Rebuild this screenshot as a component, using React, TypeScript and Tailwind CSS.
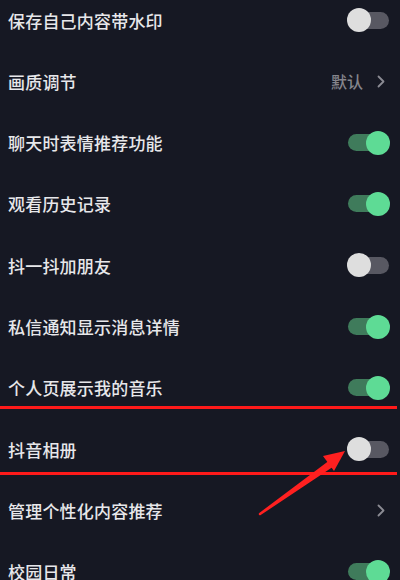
import React from 'react';

type Row = { label: string; kind: 'on' | 'off' | 'link'; value?: string };

const rows: Row[] = [
  { label: '保存自己内容带水印', kind: 'off' },
  { label: '画质调节', kind: 'link', value: '默认' },
  { label: '聊天时表情推荐功能', kind: 'on' },
  { label: '观看历史记录', kind: 'on' },
  { label: '抖一抖加朋友', kind: 'off' },
  { label: '私信通知显示消息详情', kind: 'on' },
  { label: '个人页展示我的音乐', kind: 'on' },
  { label: '抖音相册', kind: 'off' },
  { label: '管理个性化内容推荐', kind: 'link' },
  { label: '校园日常', kind: 'on' },
];

const Toggle = ({ on }: { on: boolean }) => (
  <div className="relative w-[43px] h-[24px] flex items-center">
    <div className={`mx-[1px] w-[41px] h-[17px] rounded-full ${on ? 'bg-[#3f7b5b]' : 'bg-[#585862]'}`} />
    <div
      className={`absolute top-0 w-[24px] h-[24px] rounded-full ${
        on ? 'right-0 bg-[#5edb95]' : 'left-0 bg-[#dedede]'
      }`}
    />
  </div>
);

const Chevron = () => (
  <svg width="8" height="13" viewBox="0 0 8 13" fill="none">
    <path d="M1.5 1.5 L6.5 6.5 L1.5 11.5" stroke="#8b8b93" strokeWidth="1.8" strokeLinecap="round" strokeLinejoin="round" />
  </svg>
);

const App = () => {
  return (
    <div
      className="relative w-[400px] h-[580px] overflow-hidden bg-[#161823]"
      style={{ fontFamily: '"Noto Sans CJK SC", "Noto Sans", sans-serif' }}
    >
      <div className="-mt-[10.67px] flex flex-col">
        {rows.map((r) => (
          <div key={r.label} className="h-[61.33px] flex items-center justify-between pl-2 pr-[10px]">
            <span className="text-[17px] font-medium text-[#e7e7ea] leading-none tracking-[0.2px]">{r.label}</span>
            {r.kind === 'link' ? (
              <div className="flex items-center gap-[14px] pr-[5px]">
                {r.value && <span className="text-[16px] font-medium text-[#85858c] leading-none">{r.value}</span>}
                <Chevron />
              </div>
            ) : (
              <Toggle on={r.kind === 'on'} />
            )}
          </div>
        ))}
      </div>

      {/* annotation */}
      <div className="absolute left-0 top-[406px] w-[397px] h-[3px] bg-[#ff1a1a]" />
      <div className="absolute left-0 top-[472px] w-[397px] h-[3px] bg-[#ff1a1a]" />
      <svg className="absolute left-0 top-0" width="400" height="580" viewBox="0 0 400 580">
        <path d="M260 514 L332 460 L335 464 Z" fill="#ff2020" stroke="#ff2020" strokeWidth="2.5" strokeLinejoin="round" />
        <path d="M345 451 L323 456 L334 471 Z" fill="#ff2020" />
      </svg>
    </div>
  );
};

export default App;
